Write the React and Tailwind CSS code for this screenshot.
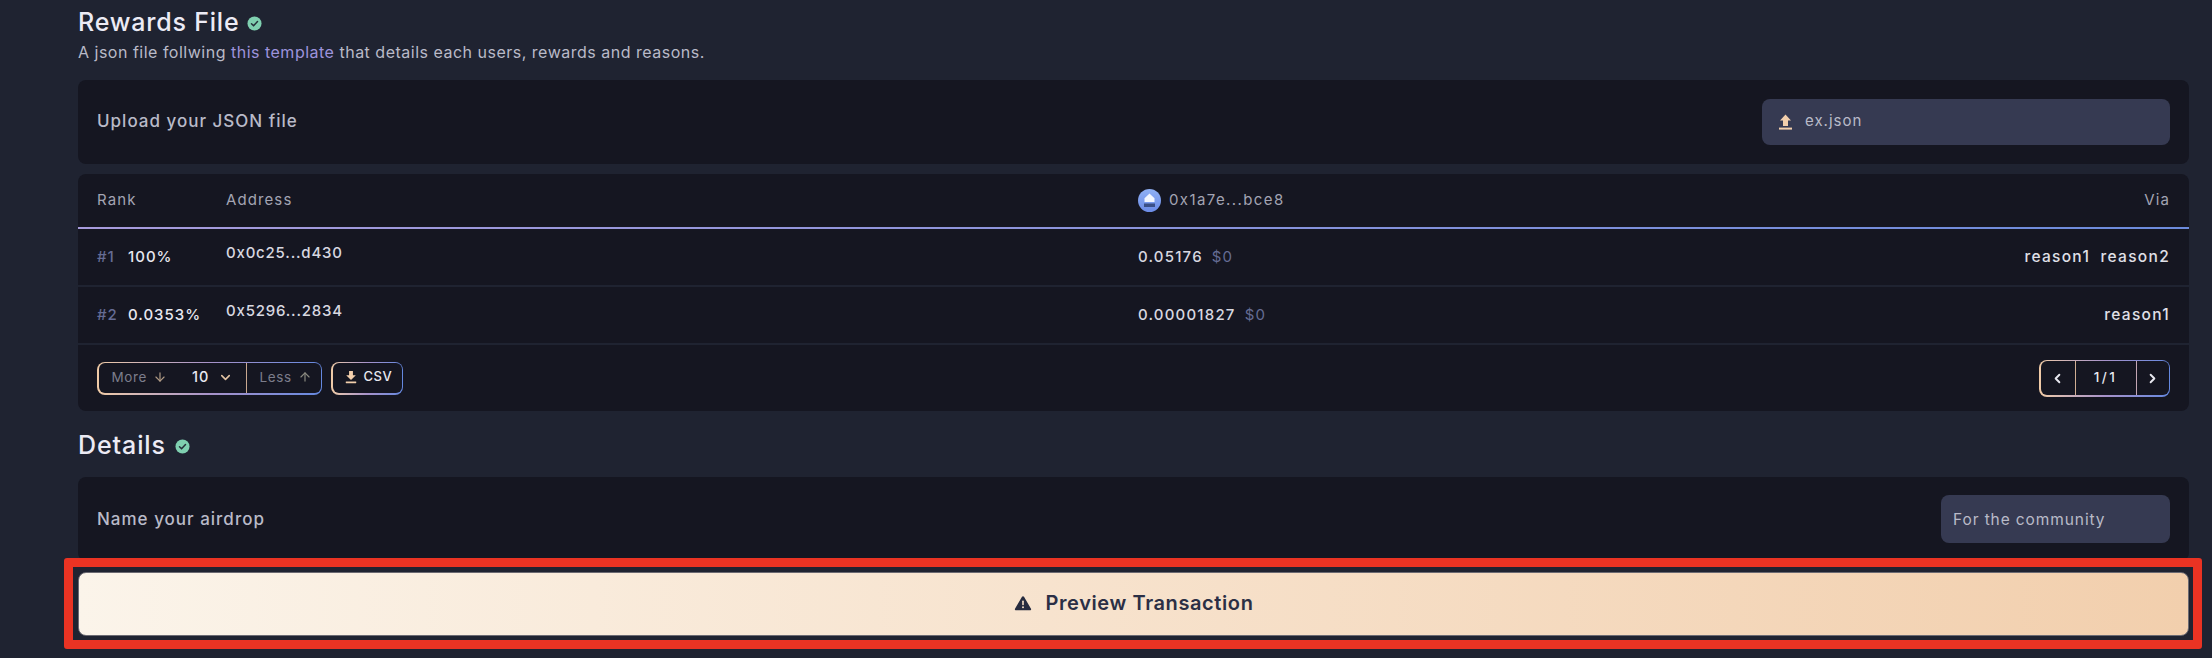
import { ChevronDown, ChevronLeft, ChevronRight, ArrowDown, ArrowUp } from 'lucide-react';

const rows = [
  { rank: '#1', share: '100%', address: '0x0c25...d430', amount: '0.05176', via: 'reason1 reason2' },
  { rank: '#2', share: '0.0353%', address: '0x5296...2834', amount: '0.00001827', via: 'reason1' },
];

// Little round green check next to the section titles
const DoneIcon = () => (
  <svg width="15" height="15" viewBox="0 0 16 16" className="shrink-0">
    <circle cx="8" cy="8" r="7.500" fill="#7fd0b0" />
    <path d="M4.800 8.300l2.200 2.200 4.200-4.600" fill="none" stroke="#25303a" strokeWidth="1.600" strokeLinecap="round" strokeLinejoin="round" />
  </svg>
);

const UploadIcon = () => (
  <svg width="15" height="16" viewBox="0 0 15 16" fill="#f3cfac" className="shrink-0">
    <path d="M7.500 0.500L13 6.500H10V12H5V6.500H2z" />
    <rect x="1" y="13.600" width="13" height="2" />
  </svg>
);

const DownloadIcon = () => (
  <svg width="14" height="14" viewBox="0 0 16 16" fill="#f3cfac" className="shrink-0">
    <path d="M5.800 1h4.400v5H13.500L8 11.500 2.500 6h3.300z" />
    <rect x="2" y="13" width="12" height="2" rx="0.500" />
  </svg>
);

const TokenIcon = () => (
  <svg width="23" height="23" viewBox="0 0 23 23" className="shrink-0">
    <defs>
      <linearGradient id="tok" x1="0" y1="0" x2="0" y2="1">
        <stop offset="0" stopColor="#8fb0f5" />
        <stop offset="1" stopColor="#6b8be6" />
      </linearGradient>
    </defs>
    <circle cx="11.500" cy="11.500" r="11.500" fill="url(#tok)" />
    <path d="M11.500 4.500l5 4.800v3.700h-10V9.300z" fill="#f2f6ff" />
    <path d="M6 14.500h11v3.500h-11z" fill="#3a4f86" />
  </svg>
);

const Warning = () => (
  <svg width="18" height="16" viewBox="0 0 18 16" className="shrink-0">
    <path d="M9 1.200c.4 0 .8.200 1 .600l7 11.900c.4.700-.1 1.500-.9 1.500H1.900c-.8 0-1.300-.8-.9-1.500l7-11.900c.2-.4.600-.6 1-.6z" fill="#262b3f" />
    <rect x="8.200" y="5.500" width="1.600" height="4.800" rx="0.700" fill="#f5dfc8" />
    <circle cx="9" cy="12.300" r="1" fill="#f5dfc8" />
  </svg>
);

const GradientBox = ({ className, children }) => (
  <div className={`rounded-lg p-[1.5px] bg-gradient-to-r from-[#f0cba6] via-[#a792c9] to-[#6488e0] ${className}`}>
    <div className="flex h-full items-stretch rounded-[6px] bg-[#151621]">{children}</div>
  </div>
);

const App = () => {
  return (
    <div className="relative h-[658px] overflow-hidden bg-[#1f2331] font-['Inter',sans-serif] text-[#e8e8f0]">
      <div className="flex flex-col pl-[78px] pr-[23px] pt-[10px]">
        <div className="flex h-[26px] items-center gap-[8px]">
          <h2 className="text-[25px] font-medium tracking-[0.8px] text-[#ecebf5]">Rewards File</h2>
          <DoneIcon />
        </div>
        <p className="mt-[6px] text-[16px] leading-[20px] tracking-[0.5px] text-[#b9bac8]">
          A json file follwing <span className="text-[#9d93dc]">this template</span> that details each users, rewards and reasons.
        </p>

        <div className="mt-[18px] flex h-[84px] items-center justify-between rounded-lg bg-[#151621] px-[19px]">
          <span className="text-[17px] font-medium tracking-[1px] text-[#b9bac8]">Upload your JSON file</span>
          <div className="flex h-[46px] w-[408px] items-center gap-[12px] rounded-lg bg-[#363a52] px-[16px] text-[15px] tracking-[1px] text-[#b9bac8]">
            <UploadIcon />
            <span className="pb-[2px]">ex.json</span>
          </div>
        </div>

        <div className="mt-[10px] rounded-lg bg-[#151621]">
          <div className="flex h-[53px] items-center px-[19px] text-[15px] tracking-[1.100px] text-[#a3a4b3]">
            <span className="w-[129px]">Rank</span>
            <span className="w-[912px]">Address</span>
            <div className="flex items-center gap-2">
              <TokenIcon />
              <span className="tracking-[1.400px]">0x1a7e...bce8</span>
            </div>
            <span className="ml-auto">Via</span>
          </div>
          <div className="h-[2px] bg-gradient-to-r from-[#a79bdc] to-[#6c8bdc]" />
          {rows.map((row) => (
            <div key={row.rank} className="flex h-[58px] items-center border-b-2 border-[#1f2331] px-[19px] text-[15px] font-medium">
              <div className="flex w-[129px] items-center gap-[9px] tracking-[1px]">
                <span className="w-[22px] text-[#656c94]">{row.rank}</span>
                <span className="text-[#e8e8f0]">{row.share}</span>
              </div>
              <span className="w-[912px] pb-[8px] tracking-[0.8px] text-[#d8d8e0]">{row.address}</span>
              <div className="flex items-center gap-[9px] tracking-[1.200px]">
                <span className="text-[#d8d8e0]">{row.amount}</span>
                <span className="font-normal text-[#656c94]">$0</span>
              </div>
              <span className="ml-auto text-[15.500px] tracking-[1.300px] [word-spacing:5px] text-[#e0e0e8]">{row.via}</span>
            </div>
          ))}
          <div className="flex h-[66px] items-center justify-between px-[19px]">
            <div className="flex items-center gap-[9px]">
              <GradientBox className="h-[33px] w-[225px] text-[13.500px] tracking-[0.6px]">
                <div className="flex w-[148px] items-center border-r border-[#c9a890] pb-[2px] pl-[13px]">
                  <span className="text-[#7c7d8b]">More</span>
                  <ArrowDown size={14} strokeWidth={2} className="ml-[6px] text-[#b09a85]" />
                  <span className="ml-[25px] text-[14.500px] font-medium tracking-[1px] text-[#e8e8f0]">10</span>
                  <ChevronDown size={15} strokeWidth={2.500} className="ml-[9px] text-[#e3c3a3]" />
                </div>
                <div className="flex items-center pb-[2px] pl-[13px]">
                  <span className="text-[#7c7d8b]">Less</span>
                  <ArrowUp size={14} strokeWidth={2} className="ml-[6px] text-[#8b8a80]" />
                </div>
              </GradientBox>
              <GradientBox className="h-[33px] w-[72px] text-[13px] font-medium">
                <div className="flex items-center gap-[6px] pb-[2px] pl-[11px]">
                  <DownloadIcon />
                  <span className="tracking-[0.5px]">CSV</span>
                </div>
              </GradientBox>
            </div>
            <GradientBox className="h-[37px] w-[131px] text-[13.500px] font-medium">
              <div className="flex w-[35px] items-center justify-center border-r border-[#d0ae93]">
                <ChevronLeft size={15} strokeWidth={3} />
              </div>
              <div className="flex w-[61px] items-center justify-center border-r border-[#c3a6b4] pb-[2px] tracking-[2.500px]">1/1</div>
              <div className="flex flex-1 items-center justify-center">
                <ChevronRight size={15} strokeWidth={3} />
              </div>
            </GradientBox>
          </div>
        </div>

        <div className="mt-[22px] flex h-[26px] items-center gap-[9px]">
          <h2 className="text-[25px] font-medium tracking-[0.900px] text-[#ecebf5]">Details</h2>
          <DoneIcon />
        </div>
        <div className="mt-[18px] flex h-[84px] items-center justify-between rounded-lg bg-[#151621] px-[19px]">
          <span className="pt-[2px] text-[17px] font-medium tracking-[1px] text-[#b9bac8]">Name your airdrop</span>
          <div className="flex h-[48px] w-[229px] items-center rounded-lg bg-[#363a52] px-[12px] pt-[2px] text-[15.500px] tracking-[0.9px] text-[#b9bac8]">
            For the community
          </div>
        </div>
      </div>

      <div className="absolute left-[64px] top-[558px] h-[91px] w-[2138px] rounded-[3px] border-[9px] border-[#ea3323] bg-[#1f2331] px-[5px] pt-[5px]">
        <button className="flex h-[64px] w-[2111px] items-center justify-center gap-[14px] rounded-lg border border-[#6b6a72] bg-gradient-to-r from-[#fbf4ea] to-[#f2cfad] pb-[2px] text-[20px] font-semibold tracking-[0.6px] text-[#2b2f45]">
          <Warning />
          <span>Preview Transaction</span>
        </button>
      </div>
    </div>
  );
};

export default App;
